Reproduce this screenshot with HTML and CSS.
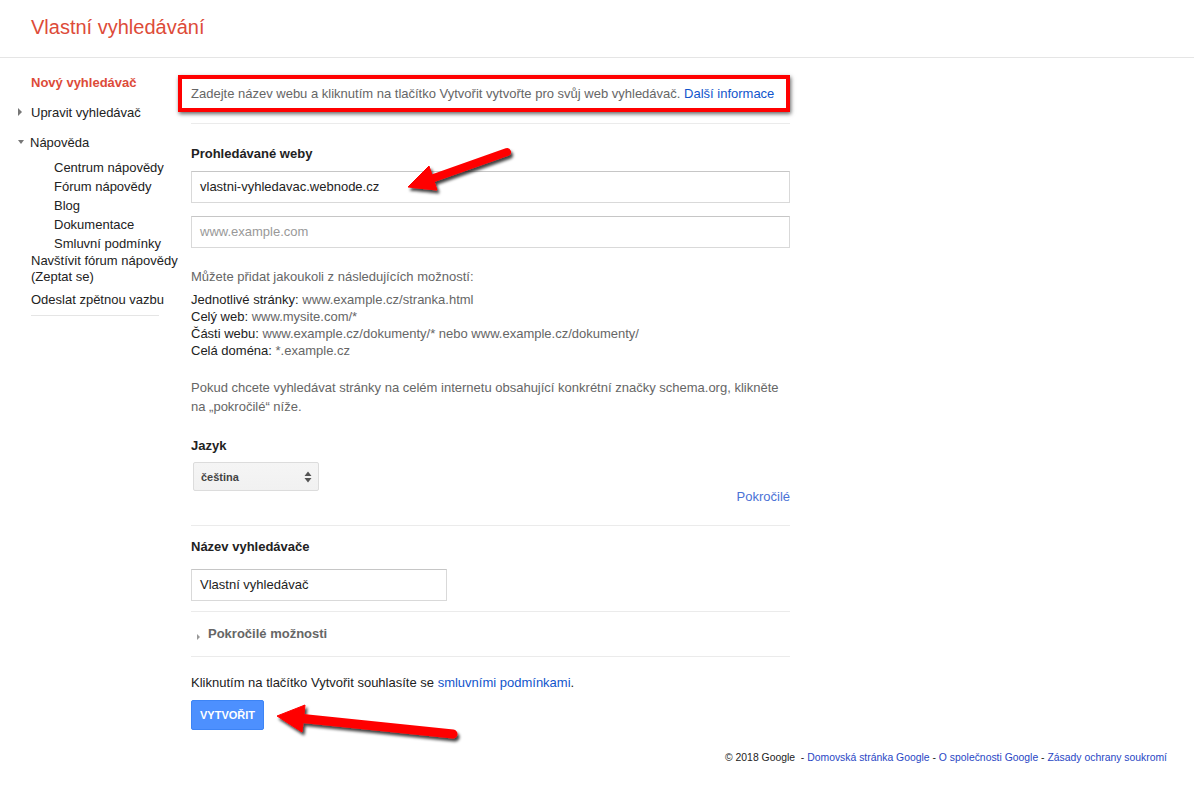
FILE: index.html
```html
<!DOCTYPE html>
<html lang="cs">
<head>
<meta charset="utf-8">
<title>Vlastní vyhledávání</title>
<link rel="stylesheet" href="styles.css">
</head>
<body>
<header class="header">
  <h1 class="title">Vlastní vyhledávání</h1>
</header>
<div class="layout">
  <nav class="sidebar">
    <div class="nav-item nav-active">Nový vyhledávač</div>
    <div class="nav-item nav-gap"><span class="tri-right"></span>Upravit vyhledávač</div>
    <div class="nav-item nav-gap"><span class="tri-down"></span>Nápověda</div>
    <ul class="sub-list">
      <li>Centrum nápovědy</li>
      <li>Fórum nápovědy</li>
      <li>Blog</li>
      <li>Dokumentace</li>
      <li>Smluvní podmínky</li>
    </ul>
    <div class="nav-two">Navštívit fórum nápovědy (Zeptat se)</div>
    <div class="nav-item nav-gap-small">Odeslat zpětnou vazbu</div>
    <div class="nav-sep"></div>
  </nav>
  <main class="main">
    <p class="intro">Zadejte název webu a kliknutím na tlačítko Vytvořit vytvořte pro svůj web vyhledávač. <a class="link">Další informace</a></p>
    <div class="rule rule-first"></div>

    <div class="label label-first">Prohledávané weby</div>
    <div class="input input-wide input-first">vlastni-vyhledavac.webnode.cz</div>
    <div class="input input-wide input-second placeholder">www.example.com</div>

    <p class="help">Můžete přidat jakoukoli z následujících možností:</p>
    <ul class="examples">
      <li><span class="dark">Jednotlivé stránky:</span> www.example.cz/stranka.html</li>
      <li><span class="dark">Celý web:</span> www.mysite.com/*</li>
      <li><span class="dark">Části webu:</span> www.example.cz/dokumenty/* nebo www.example.cz/dokumenty/</li>
      <li><span class="dark">Celá doména:</span> *.example.cz</li>
    </ul>
    <p class="schema">Pokud chcete vyhledávat stránky na celém internetu obsahující konkrétní značky schema.org, klikněte na „pokročilé“ níže.</p>

    <div class="label label-lang">Jazyk</div>
    <div class="select">
      <span class="select-text">čeština</span>
      <svg class="select-arrows" width="8" height="12" viewBox="0 0 8 12"><path d="M4 0.5 L7.5 5 L0.5 5 Z M4 11.5 L7.5 7 L0.5 7 Z" fill="#555"/></svg>
    </div>
    <div class="advanced-link"><a class="link-light">Pokročilé</a></div>
    <div class="rule rule-name"></div>

    <div class="label label-name">Název vyhledávače</div>
    <div class="input input-name">Vlastní vyhledávač</div>
    <div class="rule rule-adv"></div>

    <div class="adv-toggle"><span class="tri-small"></span>Pokročilé možnosti</div>
    <div class="rule rule-terms"></div>

    <p class="terms">Kliknutím na tlačítko Vytvořit souhlasíte se <a class="link">smluvními podmínkami</a>.</p>
    <button class="btn" type="button">VYTVOŘIT</button>
  </main>
</div>
<footer class="footer">© 2018 Google&nbsp; - <a class="foot-link">Domovská stránka Google</a> - <a class="foot-link">O společnosti Google</a> - <a class="foot-link">Zásady ochrany soukromí</a></footer>

<svg class="arrows" width="1194" height="810" viewBox="0 0 1194 810">
  <defs>
    <filter id="sh" x="-20%" y="-50%" width="140%" height="200%">
      <feDropShadow dx="2" dy="3" stdDeviation="1.6" flood-color="#000" flood-opacity="0.75"/>
    </filter>
  </defs>
  <g filter="url(#sh)" fill="#f00" stroke="#f00">
    <line x1="428" y1="180" x2="507" y2="152" stroke-width="8" stroke-linecap="round"/>
    <polygon points="408,187 429,166 437,190" stroke-width="1" stroke-linejoin="round"/>
  </g>
  <g filter="url(#sh)" fill="#f00" stroke="#f00">
    <line x1="298" y1="718" x2="453" y2="734" stroke-width="9" stroke-linecap="round"/>
    <polygon points="277,716 305,705 302,732" stroke-width="1" stroke-linejoin="round"/>
  </g>
</svg>
</body>
</html>
```
FILE: styles.css
```css
html, body {
  margin: 0;
  padding: 0;
  background: #fff;
}
body {
  position: relative;
  width: 1194px;
  min-height: 810px;
  font-family: "Liberation Sans", Arial, sans-serif;
  font-size: 13px;
  color: #222;
}
a { cursor: pointer; }

/* header */
.header {
  height: 57px;
  border-bottom: 1px solid #e5e5e5;
}
.title {
  margin: 0;
  padding-left: 31px;
  font-size: 20px;
  font-weight: normal;
  line-height: 55px;
  color: #dd4b39;
}

/* layout */
.layout {
  display: flex;
  align-items: flex-start;
}

/* sidebar */
.sidebar {
  width: 150px;
  padding-left: 31px;
  padding-top: 15px;
  flex: none;
}
.nav-item {
  line-height: 19px;
  white-space: nowrap;
}
.nav-active {
  color: #dd4b39;
  font-weight: bold;
}
.nav-gap { margin-top: 11px; }
.nav-gap-small { margin-top: 5px; }
.tri-right {
  display: inline-block;
  width: 0;
  height: 0;
  border-left: 4px solid #777;
  border-top: 4px solid transparent;
  border-bottom: 4px solid transparent;
  margin-left: -13px;
  margin-right: 9px;
  vertical-align: 1px;
}
.tri-down {
  display: inline-block;
  width: 0;
  height: 0;
  border-top: 4px solid #777;
  border-left: 3.5px solid transparent;
  border-right: 3.5px solid transparent;
  margin-left: -13px;
  margin-right: 6px;
  vertical-align: 3px;
}
.sub-list {
  list-style: none;
  margin: 6px 0 0;
  padding: 0 0 0 23px;
}
.sub-list li {
  line-height: 19px;
  white-space: nowrap;
}
.nav-two {
  line-height: 16px;
}
.nav-sep {
  width: 128px;
  margin-top: 6px;
  border-top: 1px solid #e5e5e5;
}

/* main */
.main {
  width: 599px;
  margin-left: 10px;
  padding-top: 17px;
  flex: none;
}
.intro {
  margin: 0 0 0 -13px;
  padding: 6px 9px;
  line-height: 17px;
  color: #666;
  border: 4px solid #f00;
  box-shadow: 1px 2px 4px rgba(0, 0, 0, 0.6);
  white-space: nowrap;
}
.link { color: #1155cc; }
.link-light { color: #4a72d6; }

.rule { border-top: 1px solid #ebebeb; }
.rule-first { margin-top: 11px; }
.rule-name { margin-top: 20px; }
.rule-adv { margin-top: 10px; }
.rule-terms { margin-top: 14px; }

.label {
  font-weight: bold;
  line-height: 16px;
  color: #222;
}
.label-first { margin-top: 22px; }
.label-lang { margin-top: 22px; }
.label-name { margin-top: 13px; }

.input {
  box-sizing: border-box;
  height: 32px;
  padding: 0 8px;
  line-height: 30px;
  border: 1px solid #d9d9d9;
  border-top-color: #c6c6c6;
  color: #222;
  background: #fff;
}
.input-wide { width: 599px; }
.input-first { margin-top: 9px; }
.input-second { margin-top: 13px; }
.placeholder { color: #999; }
.input-name {
  width: 256px;
  margin-top: 14px;
}

.help {
  margin: 20px 0 0;
  line-height: 17px;
  color: #666;
}
.examples {
  list-style: none;
  margin: 6px 0 0;
  padding: 0;
  color: #666;
}
.examples li { line-height: 17px; }
.dark { color: #222; }
.schema {
  margin: 19px 0 0;
  line-height: 19px;
  color: #666;
}

.select {
  box-sizing: border-box;
  width: 126px;
  height: 29px;
  margin: 8px 0 0 2px;
  padding: 0 6px 0 7px;
  display: flex;
  align-items: center;
  justify-content: space-between;
  background: linear-gradient(#f5f5f5, #f1f1f1);
  border: 1px solid #dcdcdc;
  border-radius: 2px;
}
.select-text {
  font-size: 11px;
  font-weight: bold;
  color: #444;
}
.select-arrows { display: block; }

.advanced-link {
  margin-top: -3px;
  text-align: right;
  line-height: 17px;
}

.adv-toggle {
  margin-top: 14px;
  line-height: 16px;
  font-weight: bold;
  color: #666;
}
.tri-small {
  display: inline-block;
  width: 0;
  height: 0;
  border-left: 3px solid #999;
  border-top: 3px solid transparent;
  border-bottom: 3px solid transparent;
  margin-left: 6px;
  margin-right: 8px;
  vertical-align: -2px;
}

.terms {
  margin: 18px 0 0;
  line-height: 16px;
  color: #222;
}
.btn {
  display: block;
  box-sizing: border-box;
  width: 73px;
  height: 30px;
  margin-top: 9px;
  padding: 0;
  border: 1px solid #3d84f5;
  border-radius: 2px;
  background: #4d90fe;
  color: #fff;
  font-family: "Liberation Sans", Arial, sans-serif;
  font-size: 11px;
  font-weight: bold;
}

/* footer */
.footer {
  margin-top: 21px;
  padding-right: 27px;
  text-align: right;
  font-size: 10.4px;
  line-height: 14px;
  color: #222;
}
.foot-link { color: #2846c4; }

/* annotation arrows overlay */
.arrows {
  position: absolute;
  top: 0;
  left: 0;
  pointer-events: none;
}
```
